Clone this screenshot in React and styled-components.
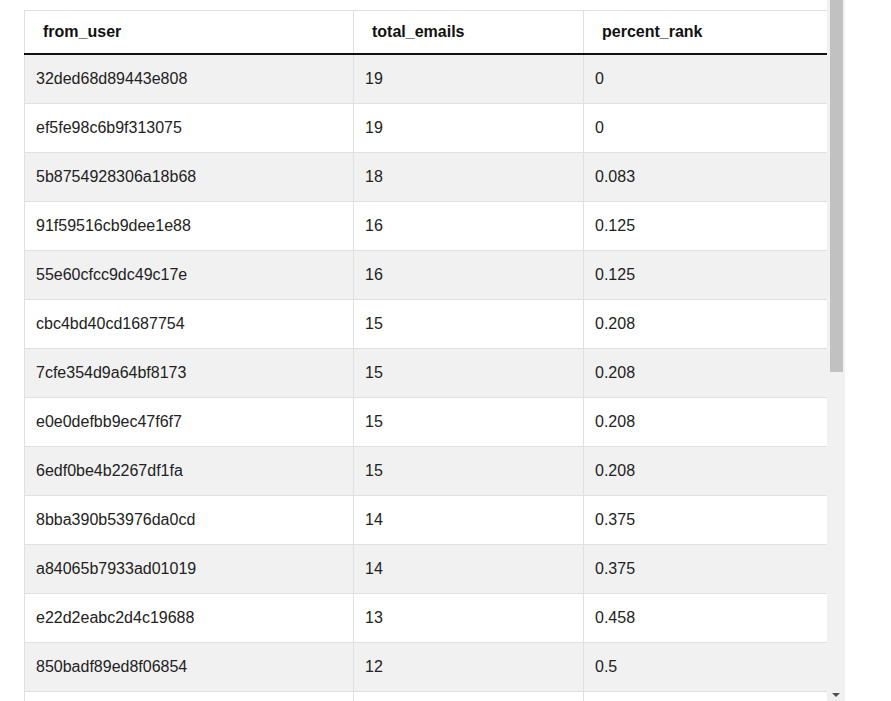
import React from "react";
import styled, { createGlobalStyle } from "styled-components";

const Global = createGlobalStyle`
  html, body { margin: 0; padding: 0; background: #fff; overflow: hidden; }
  body { font-family: "Liberation Sans", Arial, sans-serif; }
`;

const Frame = styled.div`
  display: flex;
  height: 701px;
  margin-left: 24px;
  width: 821px;
`;

const Viewport = styled.div`
  width: 803px;
  height: 701px;
  overflow: hidden;
  padding-top: 10px;
  box-sizing: border-box;
`;

const Table = styled.table`
  width: 803px;
  border-collapse: collapse;
  table-layout: fixed;
  font-size: 16px;
  color: #222;
`;

const Th = styled.th`
  text-align: left;
  font-weight: bold;
  height: 42px;
  padding: 0 0 0 18px;
  border: 1px solid #e0e0e0;
  border-bottom: 2px solid #111;
  color: #111;
`;

const Row = styled.tr`
  background: ${(p) => (p.$odd ? "#f1f1f1" : "#fff")};
`;

const Td = styled.td`
  height: 48px;
  padding: 0 0 0 11px;
  border: 1px solid #e0e0e0;
  border-top: none;
`;

const Scrollbar = styled.div`
  position: relative;
  width: 18px;
  height: 701px;
  background: #f1f1f1;
`;

const Thumb = styled.div`
  margin-left: 3px;
  width: 13px;
  height: 372px;
  background: #c1c1c1;
`;

const Arrow = styled.div`
  position: absolute;
  left: 5px;
  bottom: 4px;
  width: 0;
  height: 0;
  border-left: 4px solid transparent;
  border-right: 4px solid transparent;
  border-top: 4px solid #505050;
`;

const rows = [
  ["32ded68d89443e808", "19", "0"],
  ["ef5fe98c6b9f313075", "19", "0"],
  ["5b8754928306a18b68", "18", "0.083"],
  ["91f59516cb9dee1e88", "16", "0.125"],
  ["55e60cfcc9dc49c17e", "16", "0.125"],
  ["cbc4bd40cd1687754", "15", "0.208"],
  ["7cfe354d9a64bf8173", "15", "0.208"],
  ["e0e0defbb9ec47f6f7", "15", "0.208"],
  ["6edf0be4b2267df1fa", "15", "0.208"],
  ["8bba390b53976da0cd", "14", "0.375"],
  ["a84065b7933ad01019", "14", "0.375"],
  ["e22d2eabc2d4c19688", "13", "0.458"],
  ["850badf89ed8f06854", "12", "0.5"],
  ["", "", ""],
];

export default function App() {
  return (
    <Frame>
      <Global />
      <Viewport>
        <Table>
          <colgroup>
            <col style={{ width: 329 }} />
            <col style={{ width: 230 }} />
            <col style={{ width: 244 }} />
          </colgroup>
          <thead>
            <tr>
              <Th>from_user</Th>
              <Th>total_emails</Th>
              <Th>percent_rank</Th>
            </tr>
          </thead>
          <tbody>
            {rows.map((r, i) => (
              <Row key={i} $odd={i % 2 === 0}>
                <Td>{r[0]}</Td>
                <Td>{r[1]}</Td>
                <Td>{r[2]}</Td>
              </Row>
            ))}
          </tbody>
        </Table>
      </Viewport>
      <Scrollbar>
        <Thumb />
        <Arrow />
      </Scrollbar>
    </Frame>
  );
}
